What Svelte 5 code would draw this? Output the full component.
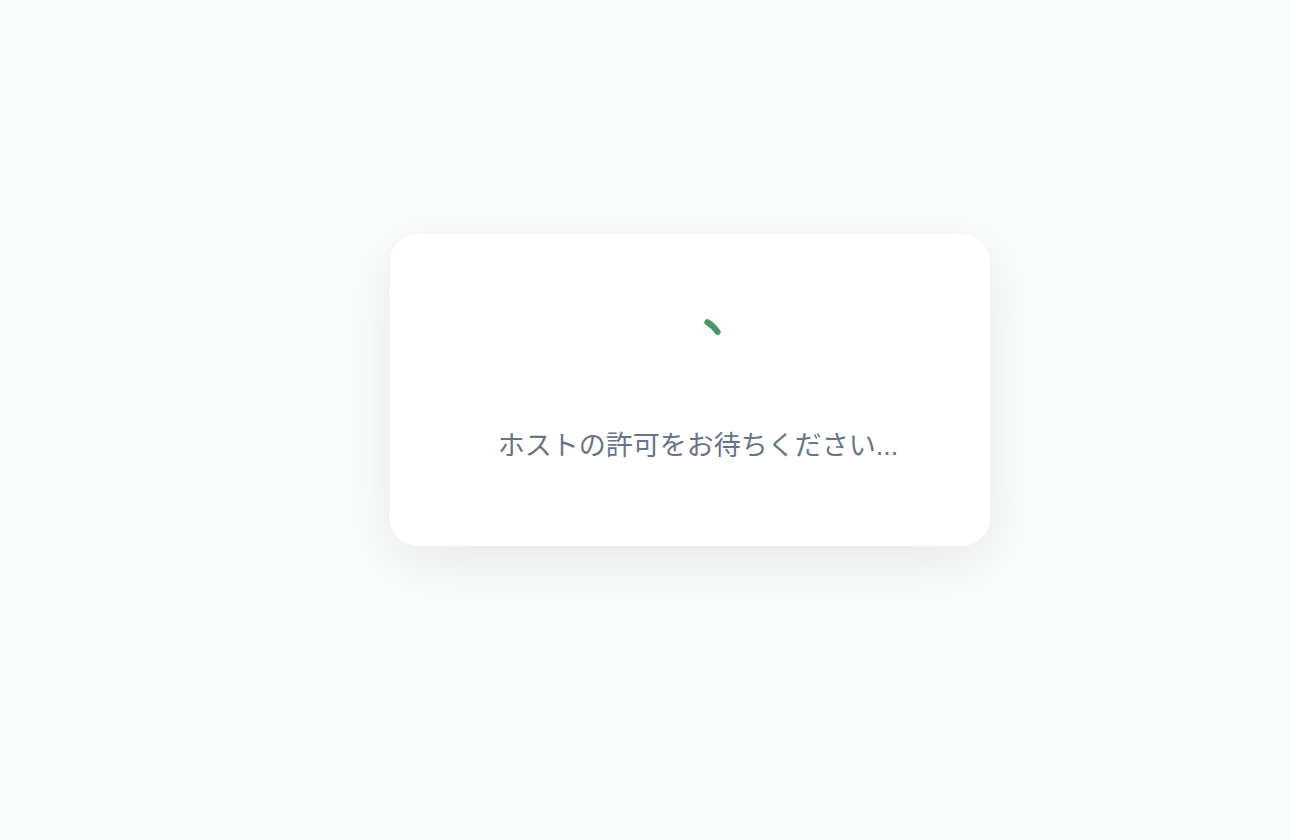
<script>
  let { message = "ホストの許可をお待ちください..." } = $props();
</script>

<main class="page">
  <section class="card" role="status" aria-live="polite">
    <svg class="spinner" viewBox="0 0 56 56" aria-hidden="true">
      <path d="M37.3 8.2Q43 11.6 47.6 18" />
    </svg>
    <p class="message">{message}</p>
  </section>
</main>

<style>
  :global(body) {
    margin: 0;
    background: #fafcfb;
  }
  .page {
    display: flex;
    align-items: center;
    justify-content: center;
    box-sizing: border-box;
    min-height: 100vh;
    padding: 0 0 60px 90px;
  }
  .card {
    display: flex;
    flex-direction: column;
    align-items: center;
    gap: 56px;
    box-sizing: border-box;
    width: 100%;
    max-width: 600px;
    padding: 80px 32px 80px 48px;
    border-radius: 28px;
    background: #fff;
    box-shadow: 0 16px 60px rgba(0, 0, 0, 0.08);
  }
  .spinner {
    width: 56px;
    height: 56px;
    fill: none;
    stroke: #479766;
    stroke-width: 6;
    stroke-linecap: round;
  }
  .message {
    margin: 0;
    color: #667587;
    font-family: "Liberation Sans", "Noto Sans CJK JP", sans-serif;
    font-size: 27px;
    line-height: 40px;
  }
</style>
